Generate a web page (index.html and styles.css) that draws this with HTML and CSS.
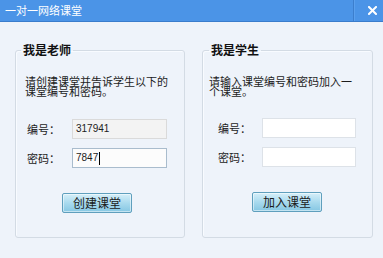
FILE: index.html
```html
<!DOCTYPE html>
<html lang="zh-CN">
<head>
<meta charset="utf-8">
<title>一对一网络课堂</title>
<link rel="stylesheet" href="styles.css">
</head>
<body>
<div class="window">
  <div class="titlebar">
    <div class="title">一对一网络课堂</div>
    <div class="sep"></div>
    <div class="close">
      <svg width="9" height="9" viewBox="0 0 9 9"><path d="M1 1 L8 8 M8 1 L1 8" stroke="#ffffff" stroke-width="2" stroke-linecap="square" fill="none"/></svg>
    </div>
  </div>
  <div class="content">
    <fieldset class="group teacher">
      <legend>我是老师</legend>
      <div class="inner">
        <p class="desc">请创建课堂并告诉学生以下的课堂编号和密码。</p>
        <div class="rows">
          <div class="row"><span class="label">编号：</span><div class="field readonly">317941</div></div>
          <div class="row"><span class="label">密码：</span><div class="field active">7847<span class="caret"></span></div></div>
        </div>
        <div class="actions"><button class="btn">创建课堂</button></div>
      </div>
    </fieldset>
    <fieldset class="group student">
      <legend>我是学生</legend>
      <div class="inner">
        <p class="desc">请输入课堂编号和密码加入一个课堂。</p>
        <div class="rows">
          <div class="row"><span class="label">编号：</span><div class="field"></div></div>
          <div class="row"><span class="label">密码：</span><div class="field"></div></div>
        </div>
        <div class="actions"><button class="btn">加入课堂</button></div>
      </div>
    </fieldset>
  </div>
</div>
</body>
</html>
```
FILE: styles.css
```css
* { box-sizing: border-box; }
html, body { margin: 0; padding: 0; }
body { background: #eef3fa; }
.window {
  width: 383px;
  height: 258px;
  background: #eef3fa;
  font-family: "Noto Sans CJK SC", "Noto Sans", sans-serif;
  color: #1c1c1c;
  overflow: hidden;
}
.titlebar {
  height: 22px;
  background: #4b94e7;
  border-bottom: 1px solid #3a7ccc;
  display: flex;
  align-items: center;
}
.title {
  padding-left: 5px;
  font-size: 11px;
  line-height: 21px;
  color: #ffffff;
}
.sep {
  margin-left: auto;
  width: 1px;
  height: 21px;
  background: #3c7ecd;
  box-shadow: 1px 0 0 #5aa0ee;
}
.close {
  width: 29px;
  height: 21px;
  display: flex;
  align-items: center;
  justify-content: flex-end;
  padding-right: 6px;
}
.close svg { display: block; }
.content {
  display: flex;
  gap: 17px;
  padding: 21px 0 0 15px;
}
.group {
  margin: 0;
  padding: 0;
  height: 195px;
  border: 1px solid #d3dbe4;
  border-radius: 3px;
  box-shadow: inset 1px 1px 0 #f8fbff;
}
.teacher { width: 170px; }
.student { width: 171px; }
legend {
  font-size: 12px;
  font-weight: bold;
  line-height: 14px;
  padding: 0 2px;
  color: #111;
}
.teacher legend { margin-left: 5px; }
.student legend { margin-left: 6px; }
.inner { padding-top: 19px; }
.teacher .inner { padding-left: 9px; }
.student .inner { padding-left: 6px; }
.desc {
  margin: 0;
  width: 150px;
  font-size: 11px;
  line-height: 10px;
}
.rows {
  display: flex;
  flex-direction: column;
  gap: 9px;
  margin-top: 23px;
}
.student .rows { margin-top: 22px; }
.row {
  display: flex;
  align-items: center;
}
.label {
  font-size: 11px;
  line-height: 14px;
}
.teacher .label { width: 47px; padding-left: 2px; }
.student .label { width: 53px; padding-left: 9px; }
.field {
  height: 20px;
  background: #ffffff;
  border: 1px solid #dde2e8;
  font-family: "Liberation Sans", Arial, sans-serif;
  font-size: 10px;
  line-height: 18px;
  padding-left: 3px;
  display: flex;
  align-items: center;
}
.teacher .field { width: 95px; }
.student .field { width: 94px; }
.field.readonly { background: #f3f3f3; border-color: #dadada; }
.field.active { border-color: #a9bccd; background: #fcfcfc; }
.caret {
  display: inline-block;
  width: 1px;
  height: 13px;
  background: #000;
  margin-left: 1px;
}
.actions {
  margin-top: 25px;
  display: flex;
}
.teacher .actions { padding-left: 37px; }
.student .actions { padding-left: 43px; }
.btn {
  width: 70px;
  height: 20px;
  padding: 0;
  border: 1px solid #5f9fbd;
  border-radius: 2px;
  background: linear-gradient(#d6eff9, #a9daee 50%, #86c7e3);
  font-family: "Noto Sans CJK SC", sans-serif;
  font-size: 12px;
  line-height: 18px;
  color: #1a1a1a;
  box-shadow: inset 0 0 0 1px rgba(255,255,255,0.5);
}
```
